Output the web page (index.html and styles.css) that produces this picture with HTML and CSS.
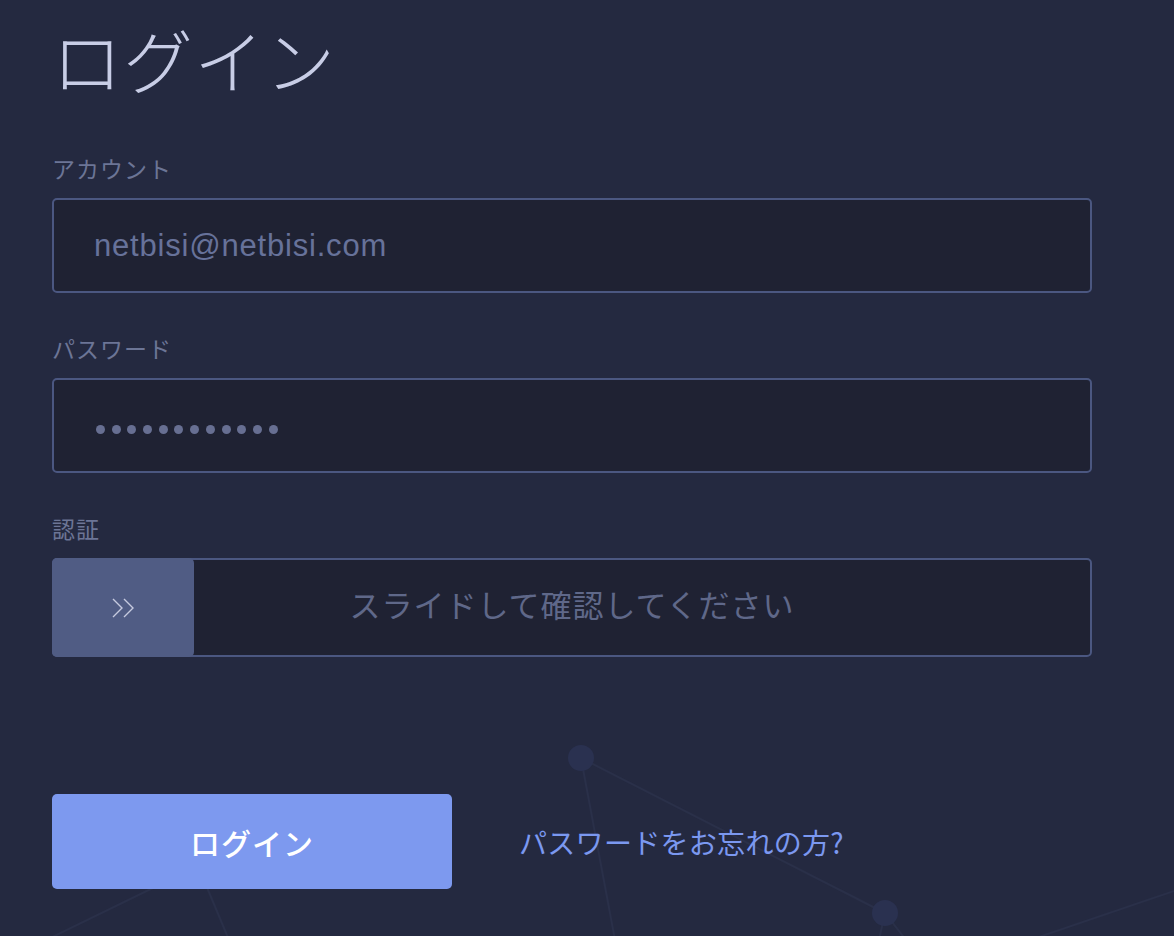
FILE: index.html
```html
<!DOCTYPE html>
<html lang="ja">
<head>
    <meta charset="UTF-8">
    <title>ログイン</title>
    <link rel="stylesheet" href="styles.css">
</head>
<body>
    <svg class="bg-net" width="1174" height="936" viewBox="0 0 1174 936">
        <g stroke="#2a3049" stroke-width="2" fill="none">
            <line x1="198" y1="866" x2="40" y2="943"/>
            <line x1="198" y1="866" x2="229" y2="940"/>
            <line x1="581" y1="758" x2="615" y2="940"/>
            <line x1="581" y1="758" x2="885" y2="913"/>
            <line x1="885" y1="913" x2="879" y2="940"/>
            <line x1="885" y1="913" x2="906" y2="940"/>
            <line x1="1180" y1="889" x2="1030" y2="940"/>
        </g>
        <g fill="#2a3150">
            <circle cx="581" cy="758" r="13"/>
            <circle cx="885" cy="913" r="13"/>
            <circle cx="198" cy="866" r="13"/>
        </g>
    </svg>

    <div class="login">
        <h1 class="title">ログイン</h1>

        <div class="field">
            <div class="label">アカウント</div>
            <div class="box text-box">netbisi@netbisi.com</div>
        </div>

        <div class="field">
            <div class="label">パスワード</div>
            <div class="box dots">
                <span></span><span></span><span></span><span></span>
                <span></span><span></span><span></span><span></span>
                <span></span><span></span><span></span><span></span>
            </div>
        </div>

        <div class="field">
            <div class="label">認証</div>
            <div class="box slider">
                <div class="knob">
                    <svg width="24" height="20" viewBox="0 0 24 20">
                        <path d="M2 1 L11 10 L2 19 M13 1 L22 10 L13 19" fill="none" stroke="#c6cadf" stroke-width="1.4"/>
                    </svg>
                </div>
                <div class="slider-text">スライドして確認してください</div>
            </div>
        </div>

        <div class="actions">
            <button class="btn">ログイン</button>
            <a class="forgot" href="#">パスワードをお忘れの方?</a>
        </div>
    </div>
</body>
</html>
```

FILE: styles.css
```css
body {
    margin: 0;
    background-color: #242940;
    font-family: "Noto Sans CJK JP", "Noto Sans", sans-serif;
    width: 1174px;
    height: 936px;
    overflow: hidden;
    position: relative;
}
.bg-net {
    position: absolute;
    left: 0;
    top: 0;
}
.login {
    position: relative;
    width: 1040px;
    padding-left: 52px;
}
.title {
    margin: 0;
    padding-top: 11px;
    height: 153px;
    box-sizing: border-box;
    font-size: 70px;
    line-height: 96px;
    font-weight: 300;
    color: #c8cde6;
    letter-spacing: 1px;
}
.field {
    margin-bottom: 40px;
}
.label {
    font-size: 23px;
    line-height: 30px;
    color: #6c7596;
    margin-bottom: 15px;
    letter-spacing: 1px;
}
.box {
    box-sizing: border-box;
    height: 95px;
    border: 2px solid #4b5781;
    border-radius: 5px;
    background-color: #1f2233;
    display: flex;
    align-items: center;
}
.text-box {
    padding-left: 40px;
    font-family: "Liberation Sans", Arial, sans-serif;
    font-size: 31px;
    letter-spacing: 0.8px;
    color: #67729a;
}
.dots {
    padding-left: 42px;
    padding-top: 8px;
    gap: 6.7px;
}
.dots span {
    width: 9px;
    height: 9px;
    border-radius: 50%;
    background-color: #676f92;
}
.slider {
    height: 99px;
    position: relative;
    justify-content: center;
}
.knob {
    position: absolute;
    left: -2px;
    top: -2px;
    bottom: -2px;
    width: 142px;
    background-color: #505c84;
    border-radius: 5px;
    display: flex;
    align-items: center;
    justify-content: center;
}
.slider-text {
    font-size: 31px;
    color: #5f6889;
    letter-spacing: 1px;
    padding-bottom: 9px;
}
.actions {
    margin-top: 137px;
    display: flex;
    align-items: center;
}
.btn {
    width: 400px;
    height: 95px;
    border: none;
    border-radius: 5px;
    background-color: #7d99ef;
    color: #ffffff;
    font-family: "Noto Sans CJK JP", sans-serif;
    font-size: 30px;
    font-weight: 500;
    letter-spacing: 1px;
}
.forgot {
    margin-left: 67px;
    font-size: 28px;
    font-weight: 400;
    letter-spacing: 0.3px;
    color: #7b98f0;
    text-decoration: none;
}
```
